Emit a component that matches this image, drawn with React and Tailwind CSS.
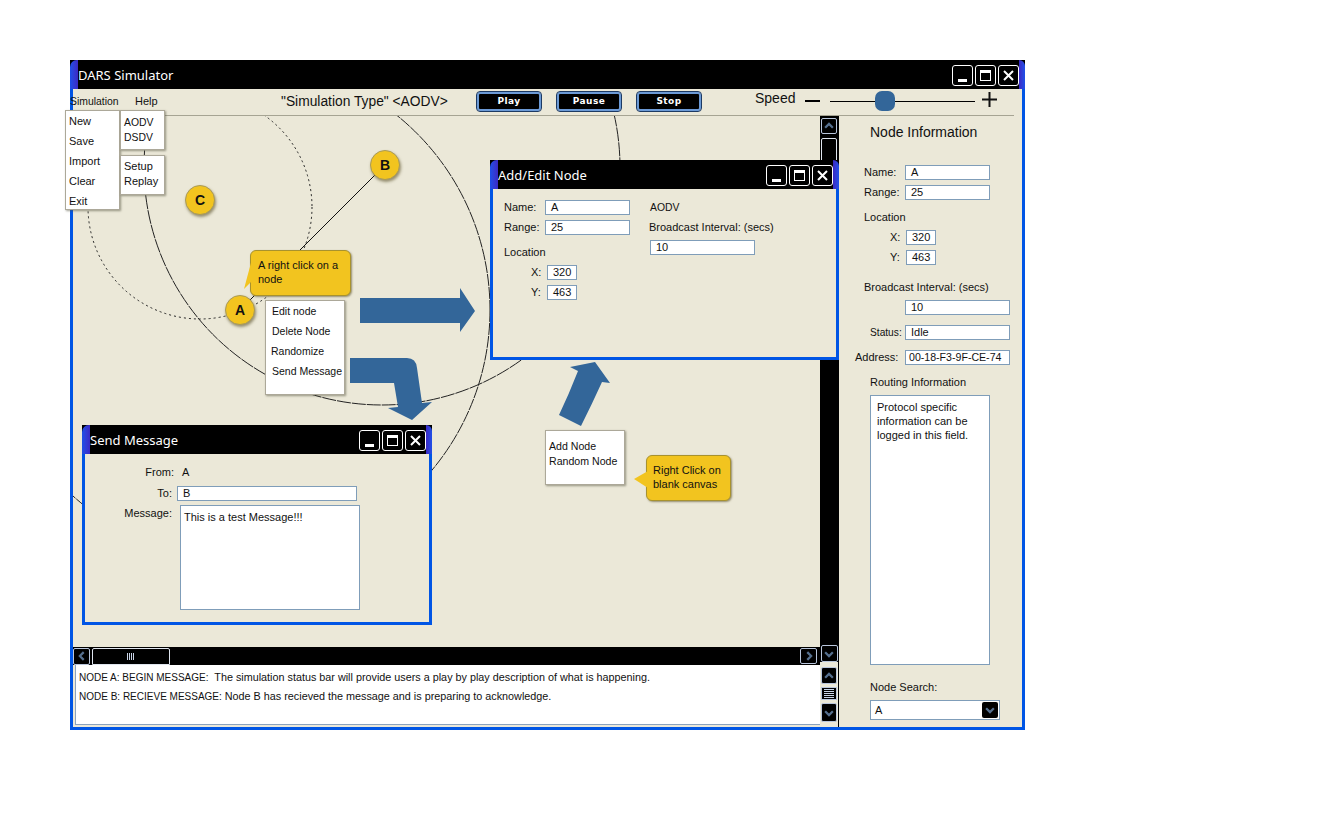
import React from "react";

const chevrons = {
  up: "M2.5 9 L7 4.5 L11.5 9",
  down: "M2.5 5 L7 9.5 L11.5 5",
  left: "M9 2.5 L4.5 7 L9 11.5",
  right: "M5 2.5 L9.5 7 L5 11.5",
};

const ScrollBtn = ({ dir, className }) => (
  <div className={`flex items-center justify-center bg-black border border-[#b9c6dc] rounded-[2px] ${className}`}>
    <svg width="12" height="12" viewBox="0 0 14 14" fill="none" stroke="#56708f" strokeWidth="2.6">
      <path d={chevrons[dir]} />
    </svg>
  </div>
);

const WinButtons = () => (
  <div className="flex gap-[2px]">
    <div className="w-[21px] h-[21px] bg-black border border-white rounded-[3px] flex items-end justify-center pb-[3px]">
      <div className="w-[9px] h-[3px] bg-white" />
    </div>
    <div className="w-[21px] h-[21px] bg-black border border-white rounded-[3px] flex items-center justify-center">
      <div className="w-[11px] h-[11px] border border-white border-t-[3px]" />
    </div>
    <div className="w-[21px] h-[21px] bg-black border border-white rounded-[3px] flex items-center justify-center">
      <svg width="13" height="13" viewBox="0 0 13 13" stroke="white" strokeWidth="2">
        <path d="M2 2 L11 11 M11 2 L2 11" />
      </svg>
    </div>
  </div>
);

const TitleBar = ({ title }) => (
  <div className="h-[29px] flex bg-black shrink-0">
    <div className="w-[8px] rounded-tl-[7px] bg-gradient-to-r from-[#1b50e8] to-[#3a28c4]" />
    <div className="flex-1 flex items-center text-white text-[13px] font-['Noto_Sans',sans-serif] leading-none pt-[1px]">
      {title}
    </div>
    <div className="pt-[5px]">
      <WinButtons />
    </div>
    <div className="w-[6px] rounded-tr-[7px] bg-gradient-to-l from-[#1b50e8] to-[#3a28c4]" />
  </div>
);

const Box = ({ value, className, valueClass }) => (
  <div className={`h-[15px] bg-white border border-[#7f9db9] pl-[5px] flex items-center leading-none whitespace-nowrap ${className}`}>
    <span className={valueClass}>{value}</span>
  </div>
);

const Row = ({ label, labelClass, boxClass, valueClass, value, className }) => (
  <div className={`flex items-center h-[15px] ${className}`}>
    <div className={`shrink-0 ${labelClass}`}>{label}</div>
    <Box value={value} className={boxClass} valueClass={valueClass} />
  </div>
);

const Popup = ({ className, children }) => (
  <div className={`absolute bg-white border border-[#aca899] shadow-[1px_1px_2px_rgba(80,80,60,0.55)] ${className}`}>
    {children}
  </div>
);

const Node = ({ name, className }) => (
  <div className={`absolute w-[30px] h-[30px] rounded-full bg-[#f2c41f] border border-[#a89a5a] shadow-[1px_2px_3px_rgba(90,80,40,0.6)] flex items-center justify-center text-[14px] font-bold ${className}`}>
    {name}
  </div>
);

const Bubble = ({ className, children }) => (
  <div className={`absolute bg-[#f2c41f] border border-[#a8922e] rounded-[6px] shadow-[1px_1px_2px_rgba(90,80,40,0.6)] leading-[14px] ${className}`}>
    {children}
  </div>
);

const PlayBtn = ({ label }) => (
  <div className="w-[64px] h-[19px] bg-black border-2 border-[#6c9ad6] outline outline-1 outline-[#1d3a63] rounded-[3px] flex items-center justify-center text-white text-[9px] font-bold tracking-[0.4px] font-['DejaVu_Sans',sans-serif]">
    {label}
  </div>
);

const CanvasDrawing = () => (
  <svg className="absolute inset-0 w-full h-full" viewBox="73 116 747 531" fill="none">
    <circle cx="240" cy="310" r="250" stroke="#222" strokeWidth="1" strokeDasharray="12 1" />
    <circle cx="382" cy="167" r="238" stroke="#222" strokeWidth="1" strokeDasharray="14 1" />
    <circle cx="200" cy="207" r="112" stroke="#222" strokeWidth="1" strokeDasharray="2 3" />
    <path d="M385 165 L240 310" stroke="#111" strokeWidth="1" />
    <path d="M360 298 H460 V288 L475 311 L460 332 V323 H360 Z" fill="#336699" />
    <path d="M350 358 H407 Q416 358 417 368 L422 403 L432 402 L412 420 L388 408 L398 407 L394 383 H350 Z" fill="#336699" />
    <path d="M559 415 L581 426 Q592 404 602 382 L610 383 L595 362 L570 367 L578 371 Q569 394 559 415 Z" fill="#336699" />
  </svg>
);

const SendMessage = () => (
  <div className="absolute left-[9px] top-[309px] w-[350px] h-[200px] flex flex-col">
    <TitleBar title="Send Message" />
    <div className="flex-1 bg-[#ebe8d8] border-x-[3px] border-b-[3px] border-[#0055e5] relative">
      <div className="flex items-center h-[15px] mt-[11px]">
        <div className="w-[89px] text-right">From:</div>
        <div className="ml-[8px]">A</div>
      </div>
      <div className="flex items-center h-[15px] mt-[6px]">
        <div className="w-[87px] text-right">To:</div>
        <Box value="B" className="ml-[5px] w-[180px]" />
      </div>
      <div className="flex mt-[4px]">
        <div className="w-[87px] text-right">Message:</div>
        <div className="ml-[8px] w-[180px] h-[105px] bg-white border border-[#7f9db9] pl-[3px] pt-[4px] leading-[14px]">
          This is a test Message!!!
        </div>
      </div>
    </div>
  </div>
);

const AddEditNode = () => (
  <div className="absolute left-[417px] top-[44px] w-[349px] h-[200px] flex flex-col z-10">
    <TitleBar title="Add/Edit Node" />
    <div className="flex-1 bg-[#ebe8d8] border-x-[3px] border-b-[3px] border-[#0055e5] flex">
      <div className="w-[146px] pl-[11px]">
        <Row label="Name:" labelClass="w-[41px]" boxClass="w-[85px]" value="A" className="mt-[11px]" />
        <Row label="Range:" labelClass="w-[41px]" boxClass="w-[85px]" value="25" className="mt-[5px]" />
        <div className="mt-[10px] h-[14px] leading-[14px]">Location</div>
        <Row label="X:" labelClass="w-[43px] pl-[27px]" boxClass="w-[30px]" value="320" className="mt-[6px]" />
        <Row label="Y:" labelClass="w-[43px] pl-[27px]" boxClass="w-[30px]" value="463" className="mt-[5px]" />
      </div>
      <div className="pl-[10px]">
        <div className="mt-[11px] h-[15px] leading-[15px] text-[10.4px] pl-[1px]">AODV</div>
        <div className="mt-[5px] h-[15px] leading-[15px]">Broadcast Interval: (secs)</div>
        <Box value="10" className="mt-[5px] w-[105px] ml-[1px]" />
      </div>
    </div>
  </div>
);

const NodePanel = () => (
  <div className="flex-1 flex flex-col border-l border-black">
    <div className="mt-[7px] h-[18px] pl-[31px] text-[14px] leading-[18px]">Node Information</div>
    <Row label="Name:" labelClass="w-[66px] pl-[25px]" boxClass="w-[85px]" value="A" className="mt-[24px]" />
    <Row label="Range:" labelClass="w-[66px] pl-[25px]" boxClass="w-[85px]" value="25" className="mt-[5px]" />
    <div className="mt-[10px] h-[14px] leading-[14px] pl-[25px]">Location</div>
    <Row label="X:" labelClass="w-[67px] pl-[51px]" boxClass="w-[30px]" value="320" className="mt-[6px]" />
    <Row label="Y:" labelClass="w-[67px] pl-[51px]" boxClass="w-[30px]" value="463" className="mt-[5px]" />
    <div className="mt-[15px] h-[14px] leading-[14px] pl-[25px]">Broadcast Interval: (secs)</div>
    <Box value="10" className="mt-[6px] ml-[66px] w-[105px] shrink-0" />
    <Row label="Status:" labelClass="w-[66px] pl-[31px] text-[10.2px]" boxClass="w-[105px]" value="Idle" className="mt-[10px]" />
    <Row label="Address:" labelClass="w-[66px] pl-[16px]" boxClass="w-[105px]" valueClass="text-[10.6px] -ml-[2px]" value="00-18-F3-9F-CE-74" className="mt-[10px]" />
    <div className="mt-[10px] h-[14px] leading-[14px] pl-[31px]">Routing Information</div>
    <div className="mt-[6px] ml-[31px] w-[120px] h-[270px] shrink-0 bg-white border border-[#7f9db9] px-[6px] pt-[4px] leading-[14px]">
      Protocol specific information can be logged in this field.
    </div>
    <div className="mt-[15px] h-[14px] leading-[14px] pl-[31px]">Node Search:</div>
    <div className="mt-[6px] ml-[31px] w-[130px] h-[20px] shrink-0 bg-white border border-[#7f9db9] flex items-center justify-between pl-[4px] pr-[1px]">
      <span className="pt-[1px]">A</span>
      <ScrollBtn dir="down" className="w-[16px] h-[16px] border-none" />
    </div>
  </div>
);

export default function App() {
  return (
    <div className="w-[1324px] h-[831px] bg-white pl-[70px] pt-[60px] font-['Liberation_Sans',Arial,sans-serif] text-[11px] text-[#111] overflow-hidden">
      <div className="relative w-[955px] h-[670px] flex flex-col">
        <TitleBar title="DARS Simulator" />
        <div className="flex-1 flex flex-col bg-[#ebe8d8] border-x-[3px] border-b-[3px] border-[#0055e5]">
          {/* toolbar */}
          <div className="h-[26px] shrink-0 flex items-center -ml-[3px]">
            <div className="w-[65px] text-[10.4px]">Simulation</div>
            <div className="w-[146px] -mt-[1px]">Help</div>
            <div className="w-[196px] text-[13.8px] pt-[1px]">"Simulation Type" &lt;AODV&gt;</div>
            <div className="flex gap-[16px] -mt-[1px]">
              <PlayBtn label="Play" />
              <PlayBtn label="Pause" />
              <PlayBtn label="Stop" />
            </div>
            <div className="ml-[54px] w-[50px] text-[14px] -mt-[8px]">Speed</div>
            <div className="w-[15px] h-[2px] bg-black -mt-[3px]" />
            <div className="ml-[10px] w-[145px] h-[1px] bg-black -mt-[2px] relative">
              <div className="absolute left-[45px] -top-[10px] w-[20px] h-[20px] rounded-[7px] bg-[#336699]" />
            </div>
            <svg className="ml-[7px] -mt-[5px]" width="15" height="15" viewBox="0 0 15 15" stroke="#111" strokeWidth="2">
              <path d="M0 7.5 H15 M7.5 0 V15" />
            </svg>
          </div>
          <div className="h-[1px] w-[941px] shrink-0 bg-[#a6a493]" />

          <div className="flex-1 flex min-h-0">
            <div className="w-[747px] flex flex-col">
              {/* canvas */}
              <div className="relative h-[531px] shrink-0">
                <CanvasDrawing />
                <Node name="B" className="left-[297px] top-[34px]" />
                <Node name="C" className="left-[112px] top-[69px]" />
                <Node name="A" className="left-[152px] top-[179px]" />

                <Bubble className="left-[177px] top-[134px] w-[101px] h-[46px] pl-[7px] pt-[7px] pr-[4px]">
                  <svg className="absolute -left-[8px] top-[8px]" width="9" height="32" viewBox="0 0 9 32">
                    <path d="M9 0 L1 30 L9 22 Z" fill="#f2c41f" />
                  </svg>
                  A right click on a node
                </Bubble>
                <Popup className="left-[192px] top-[184px] w-[80px] h-[95px] whitespace-nowrap text-[10.5px]">
                  <div className="absolute left-[6px] top-0 h-[20px] leading-[20px]">Edit node</div>
                  <div className="absolute left-[6px] top-[20px] h-[20px] leading-[20px]">Delete Node</div>
                  <div className="absolute left-[5px] top-[40px] h-[20px] leading-[20px]">Randomize</div>
                  <div className="absolute left-[6px] top-[60px] h-[20px] leading-[20px]">Send Message</div>
                </Popup>

                <Popup className="left-[472px] top-[314px] w-[80px] h-[55px] pl-[3px] pt-[8px] leading-[15px] text-[10.6px]">
                  <div>Add Node</div>
                  <div>Random Node</div>
                </Popup>
                <Bubble className="left-[573px] top-[339px] w-[85px] h-[46px] pl-[6px] pt-[7px]">
                  <svg className="absolute -left-[14px] top-[15px]" width="15" height="18" viewBox="0 0 15 18">
                    <path d="M15 0 L1 8 L15 17 Z" fill="#f2c41f" />
                  </svg>
                  Right Click on blank canvas
                </Bubble>

                <SendMessage />
                <AddEditNode />
              </div>

              {/* horizontal scrollbar */}
              <div className="h-[18px] shrink-0 bg-black flex items-center pr-[3px]">
                <ScrollBtn dir="left" className="w-[17px] h-[17px]" />
                <div className="ml-[2px] w-[78px] h-[17px] border border-[#dfe5ee] rounded-t-[2px] flex items-center justify-center">
                  <div className="w-[8px] h-[7px] bg-[repeating-linear-gradient(90deg,#c9d4e6_0px,#c9d4e6_1px,#000_1px,#000_2px)]" />
                </div>
                <ScrollBtn dir="right" className="ml-auto w-[17px] h-[16px]" />
              </div>

              {/* status log */}
              <div className="h-[60px] shrink-0 ml-[2px] bg-white border-l border-b border-[#8ba2bd] pl-[3px] pt-[3px] leading-[19px] text-[10.8px]">
                <div><span className="text-[10px]">NODE A: BEGIN MESSAGE:</span>&nbsp; The simulation status bar will provide users a play by play description of what is happening.</div>
                <div><span className="text-[10px]">NODE B: RECIEVE MESSAGE:</span> Node B has recieved the message and is preparing to acknowledge.</div>
              </div>
            </div>

            {/* vertical scrollbars */}
            <div className="w-[18px] shrink-0 flex flex-col">
              <div className="h-[546px] shrink-0 bg-black flex flex-col items-center pt-[2px]">
                <ScrollBtn dir="up" className="w-[16px] h-[16px]" />
                <div className="mt-[4px] w-[16px] h-[150px] border border-[#dfe5ee] rounded-t-[2px]" />
                <ScrollBtn dir="down" className="mt-auto w-[17px] h-[17px]" />
              </div>
              <div className="flex flex-col items-center mt-[5px]">
                <ScrollBtn dir="up" className="w-[16px] h-[17px]" />
                <div className="mt-[3px] w-[16px] h-[13px] bg-black border border-[#b9c6dc] flex items-center justify-center">
                  <div className="w-[10px] h-[9px] bg-[repeating-linear-gradient(0deg,#c9d4e6_0px,#c9d4e6_1px,#000_1px,#000_2px)]" />
                </div>
                <ScrollBtn dir="down" className="mt-[3px] w-[16px] h-[19px]" />
              </div>
            </div>

            <NodePanel />
          </div>
        </div>

        {/* open menus */}
        <Popup className="-left-[5px] top-[50px] w-[55px] h-[100px] z-20">
          <div className="pl-[3px] leading-[20px]">
            <div>New</div>
            <div>Save</div>
            <div>Import</div>
            <div>Clear</div>
            <div>Exit</div>
          </div>
        </Popup>
        <Popup className="left-[50px] top-[50px] w-[45px] h-[40px] pl-[3px] pt-[4px] leading-[15px] z-20 text-[10.4px]">
          <div>AODV</div>
          <div>DSDV</div>
        </Popup>
        <Popup className="left-[50px] top-[95px] w-[45px] h-[40px] pl-[3px] pt-[3px] leading-[15px] z-20">
          <div>Setup</div>
          <div>Replay</div>
        </Popup>
      </div>
    </div>
  );
}
